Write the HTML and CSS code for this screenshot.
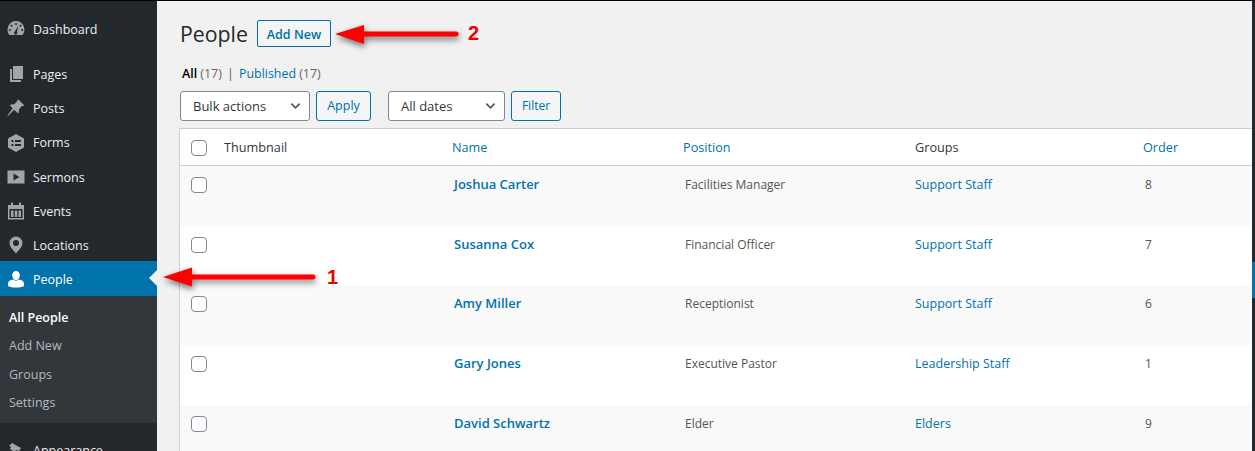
FILE: index.html
```html
<!DOCTYPE html>
<html lang="en">
<head>
    <meta charset="UTF-8">
    <meta name="viewport" content="width=device-width, initial-scale=1.0">
    <title>People</title>
    <link rel="stylesheet" href="styles.css">
</head>
<body>
    <div class="page">
        <nav class="sidebar">
            <a class="menu-item first">
                <svg class="icon" viewBox="0 0 20 20"><path d="M10 2a8.500 8.500 0 0 0-8.500 8.500c0 2 .7 3.900 1.900 5.400h13.200a8.500 8.500 0 0 0 1.900-5.400A8.500 8.500 0 0 0 10 2zM10 4a1 1 0 1 1 0 2 1 1 0 0 1 0-2zM5.500 5.800a1 1 0 1 1 0 2 1 1 0 0 1 0-2zM14.500 5.800a1 1 0 1 1 0 2 1 1 0 0 1 0-2zM3.800 10a1 1 0 1 1 0 2 1 1 0 0 1 0-2zM16.200 10a1 1 0 1 1 0 2 1 1 0 0 1 0-2zM12.300 6.800l-1.300 6a1.700 1.700 0 1 1-2.100-.4z" fill-rule="evenodd"/></svg>
                <span>Dashboard</span>
            </a>
            <a class="menu-item gap">
                <svg class="icon" viewBox="0 0 20 20"><path d="M7 2h10v13H7z"/><path d="M4 5h2v11h9v2H4z"/></svg>
                <span>Pages</span>
            </a>
            <a class="menu-item">
                <svg class="icon" viewBox="0 0 20 20"><path d="M12.500 1.500l6 6-1.600.6-1 0-3 3.300c.4 1.500 0 3-.9 4.100L8.200 11.700 2 18l-.6-.6 5.300-7.100-3-3c1.200-.9 2.700-1.200 4.100-.8l3.300-3 0-1z"/></svg>
                <span>Posts</span>
            </a>
            <a class="menu-item">
                <svg class="icon" viewBox="0 0 20 20"><path d="M10 1l8 4.500v9L10 19l-8-4.500v-9zM5.500 7v2h2V7zM5.500 11v2h2v-2zM9 7v2h6V7zM9 11v2h6v-2z" fill-rule="evenodd"/></svg>
                <span>Forms</span>
            </a>
            <a class="menu-item">
                <svg class="icon" viewBox="0 0 20 20"><path d="M1.500 3.500h17v13h-17zM7.500 6.500v7l6-3.500z" fill-rule="evenodd"/></svg>
                <span>Sermons</span>
            </a>
            <a class="menu-item">
                <svg class="icon" viewBox="0 0 20 20"><path d="M5 1.500h2V4h6V1.500h2V4h3v14.500H2V4h3zM3.500 8v9h13V8zM5 9.500h2.500V16H5zM8.800 9.500h2.500V16H8.800zM12.500 9.500H15V16h-2.500z" fill-rule="evenodd"/></svg>
                <span>Events</span>
            </a>
            <a class="menu-item">
                <svg class="icon" viewBox="0 0 20 20"><path d="M10 1.500a6.500 6.500 0 0 0-6.500 6.500c0 4 4.500 8 6.500 10.500 2-2.500 6.500-6.500 6.500-10.500A6.500 6.500 0 0 0 10 1.500zM10 5a3 3 0 1 1 0 6 3 3 0 0 1 0-6z" fill-rule="evenodd"/></svg>
                <span>Locations</span>
            </a>
            <a class="menu-item current">
                <svg class="icon" viewBox="0 0 20 20"><path d="M10 2c2.200 0 3.800 1.800 3.800 4.200S12.200 11 10 11 6.200 8.600 6.200 6.200 7.800 2 10 2z"/><path d="M7 10.500c1.600 1.500 4.400 1.500 6 0 2.700.4 5 1.700 5 4.200V17c-2 1-5 1.500-8 1.500S4 18 2 17v-2.300c0-2.500 2.300-3.800 5-4.200z"/></svg>
                <span>People</span>
            </a>
            <div class="submenu">
                <a class="active">All People</a>
                <a>Add New</a>
                <a>Groups</a>
                <a>Settings</a>
            </div>
            <a class="menu-item appearance">
                <svg class="icon" viewBox="0 0 20 20"><path d="M6 2l9 5-2 3-3-1-1 2-5-3 1-2-2-1zM3 10l5 3-1 5-6-3z"/></svg>
                <span>Appearance</span>
            </a>
        </nav>

        <main class="content">
            <div class="heading">
                <h1>People</h1>
                <a class="add-new">Add New</a>
            </div>
            <div class="views">
                <b>All</b> <span class="count">(17)</span> <span class="sep">|</span> <a>Published</a> <span class="count">(17)</span>
            </div>
            <div class="tablenav">
                <div class="select bulk">Bulk actions
                    <svg viewBox="0 0 12 8"><path d="M1.500 1.500L6 6l4.500-4.500" /></svg>
                </div>
                <a class="btn apply">Apply</a>
                <div class="select dates">All dates
                    <svg viewBox="0 0 12 8"><path d="M1.500 1.500L6 6l4.500-4.500" /></svg>
                </div>
                <a class="btn filter">Filter</a>
            </div>

            <div class="table">
                <div class="row head">
                    <div><span class="check"></span></div>
                    <div>Thumbnail</div>
                    <div class="link">Name</div>
                    <div class="link">Position</div>
                    <div>Groups</div>
                    <div class="link">Order</div>
                </div>
                <div class="row">
                    <div><span class="check"></span></div>
                    <div></div>
                    <div class="name">Joshua Carter</div>
                    <div class="indent">Facilities Manager</div>
                    <div class="link">Support Staff</div>
                    <div class="indent">8</div>
                </div>
                <div class="row">
                    <div><span class="check"></span></div>
                    <div></div>
                    <div class="name">Susanna Cox</div>
                    <div class="indent">Financial Officer</div>
                    <div class="link">Support Staff</div>
                    <div class="indent">7</div>
                </div>
                <div class="row">
                    <div><span class="check"></span></div>
                    <div></div>
                    <div class="name">Amy Miller</div>
                    <div class="indent">Receptionist</div>
                    <div class="link">Support Staff</div>
                    <div class="indent">6</div>
                </div>
                <div class="row">
                    <div><span class="check"></span></div>
                    <div></div>
                    <div class="name">Gary Jones</div>
                    <div class="indent">Executive Pastor</div>
                    <div class="link">Leadership Staff</div>
                    <div class="indent">1</div>
                </div>
                <div class="row">
                    <div><span class="check"></span></div>
                    <div></div>
                    <div class="name">David Schwartz</div>
                    <div class="indent">Elder</div>
                    <div class="link">Elders</div>
                    <div class="indent">9</div>
                </div>
            </div>
        </main>

        <div class="edge"><div class="edge-mark"></div></div>
    </div>

    <!-- annotation arrows drawn on top of the screenshot -->
    <svg class="arrow arrow-one" viewBox="0 0 170 40">
        <path class="arrow-shape" d="M5 20L34 10.500V17.500H155a2.500 2.500 0 0 1 0 5H34V29.500z"/>
    </svg>
    <span class="arrow-label label-one">1</span>
    <svg class="arrow arrow-two" viewBox="0 0 140 40">
        <path class="arrow-shape" d="M5 21L34 12V18.500H126a2.500 2.500 0 0 1 0 5H34V31z"/>
    </svg>
    <span class="arrow-label label-two">2</span>
</body>
</html>
```

FILE: styles.css
```css
html, body {
    margin: 0;
    padding: 0;
}
body {
    font-family: "Open Sans", "Noto Sans", sans-serif;
    font-size: 13px;
    color: #32373c;
    background-color: #f1f1f1;
    overflow: hidden;
    height: 451px;
    position: relative;
}
.page {
    display: flex;
    height: 450px;
    border-top: 1px solid #000;
    overflow: hidden;
}

/* sidebar */
.sidebar {
    flex: 0 0 157px;
    background-color: #23282d;
    color: #eee;
    font-size: 12.500px;
}
.menu-item {
    display: flex;
    align-items: center;
    height: 34.200px;
    padding-left: 6px;
    gap: 7px;
}
.menu-item span {
    line-height: 1;
    margin-top: 4px;
}
.menu-item.first {
    margin-top: 10px;
}
.menu-item.gap {
    margin-top: 11px;
}
.icon {
    width: 20px;
    height: 20px;
    margin-top: 2px;
    fill: #a0a5aa;
    flex: none;
}
.menu-item.current {
    background-color: #0073aa;
    color: #fff;
    position: relative;
}
.menu-item.current .icon {
    fill: #fff;
}
.menu-item.current::after {
    content: "";
    position: absolute;
    right: 0;
    top: 50%;
    margin-top: -8px;
    border: 8px solid transparent;
    border-right-color: #f1f1f1;
    border-left-width: 0;
}
.submenu {
    background-color: #32373c;
    padding: 8px 0 6px;
    height: 113px;
}
.submenu a {
    display: block;
    padding-left: 9px;
    line-height: 28.500px;
    color: #b4b9be;
    font-size: 12.500px;
}
.submenu a.active {
    color: #fff;
    font-weight: 600;
}
.appearance {
    margin-top: 10px;
}

/* main column */
.content {
    flex: 1;
    min-width: 0;
    padding: 19px 0 0 22px;
}
.heading {
    display: flex;
    align-items: center;
    gap: 9px;
    height: 27px;
    margin-bottom: 18px;
}
h1 {
    margin: 0 0 0 1px;
    font-size: 21.300px;
    font-weight: 400;
    color: #23282d;
}
.add-new {
    box-sizing: border-box;
    height: 27px;
    width: 74px;
    border: 1px solid #0071a1;
    border-radius: 2px;
    background-color: #f3f5f6;
    color: #0071a1;
    font-weight: 600;
    font-size: 12.500px;
    text-align: center;
    line-height: 27px;
}
.views {
    height: 18px;
    line-height: 18px;
    margin-left: 3px;
    font-size: 12.400px;
    color: #666;
}
.views b {
    color: #000;
    font-weight: 600;
}
.views a, .link {
    color: #0073aa;
}
.sep {
    color: #555;
    margin: 0 2px;
}
.tablenav {
    display: flex;
    align-items: center;
    height: 30px;
    margin-top: 8px;
    margin-left: 1px;
    margin-bottom: 7px;
}
.select {
    box-sizing: border-box;
    height: 30px;
    border: 1px solid #7e8993;
    border-radius: 3px;
    background-color: #fff;
    padding-left: 12px;
    line-height: 28px;
    position: relative;
    color: #32373c;
}
.select svg {
    position: absolute;
    right: 8px;
    top: 10px;
    width: 11px;
    height: 8px;
    fill: none;
    stroke: #555;
    stroke-width: 1.800;
}
.bulk {
    width: 130px;
    margin-right: 6px;
}
.dates {
    width: 117px;
    margin-right: 6px;
}
.btn {
    box-sizing: border-box;
    height: 30px;
    border: 1px solid #0071a1;
    border-radius: 3px;
    background-color: #f3f5f6;
    color: #0071a1;
    line-height: 28px;
    font-size: 12.500px;
    text-align: center;
}
.apply {
    width: 55px;
    margin-right: 17px;
}
.filter {
    width: 50px;
    font-size: 12px;
}

/* list table */
.table {
    border: 1px solid #ccd0d4;
    border-right: none;
    background-color: #fff;
}
.row {
    display: grid;
    grid-template-columns: 44px 228px 231px 232px 228px 1fr;
    height: 59.700px;
    line-height: 18px;
    padding-top: 9px;
    box-sizing: border-box;
}
.row:nth-child(even) {
    background-color: #f9f9f9;
}
.row.head {
    height: 37px;
    border-bottom: 1px solid #ccd0d4;
    background-color: #fff;
    font-size: 12.700px;
}
.check {
    display: block;
    box-sizing: border-box;
    width: 16px;
    height: 16px;
    margin: 2px 0 0 11px;
    border: 1px solid #7e8993;
    border-radius: 4px;
    background-color: #fff;
}
.name {
    padding-left: 2px;
    color: #0073aa;
    font-weight: 600;
}
.indent {
    padding-left: 2px;
    padding-top: 1px;
    font-size: 12px;
    color: #555;
}
.row .link {
    font-size: 12.500px;
}
.row.head .link {
    font-size: 12.700px;
}
.row:not(.head) .link {
    padding-top: 1px;
}

/* right edge strip */
.edge {
    flex: 0 0 3px;
    background-color: #23282d;
}
.edge-mark {
    height: 36px;
    margin-top: 261px;
    background-color: #0073aa;
}

/* annotations */
.arrow {
    position: absolute;
    overflow: visible;
}
.arrow-shape {
    fill: #f00;
    filter: drop-shadow(1px 3px 3px rgba(0, 0, 0, 0.55));
}
.arrow-one {
    left: 158px;
    top: 257px;
    width: 170px;
    height: 40px;
}
.arrow-two {
    left: 330px;
    top: 13px;
    width: 140px;
    height: 40px;
}
.arrow-label {
    position: absolute;
    font-family: "Liberation Sans", sans-serif;
    font-weight: 700;
    font-size: 20px;
    color: #e00;
}
.label-one {
    left: 327px;
    top: 266px;
}
.label-two {
    left: 468px;
    top: 22px;
}
```
